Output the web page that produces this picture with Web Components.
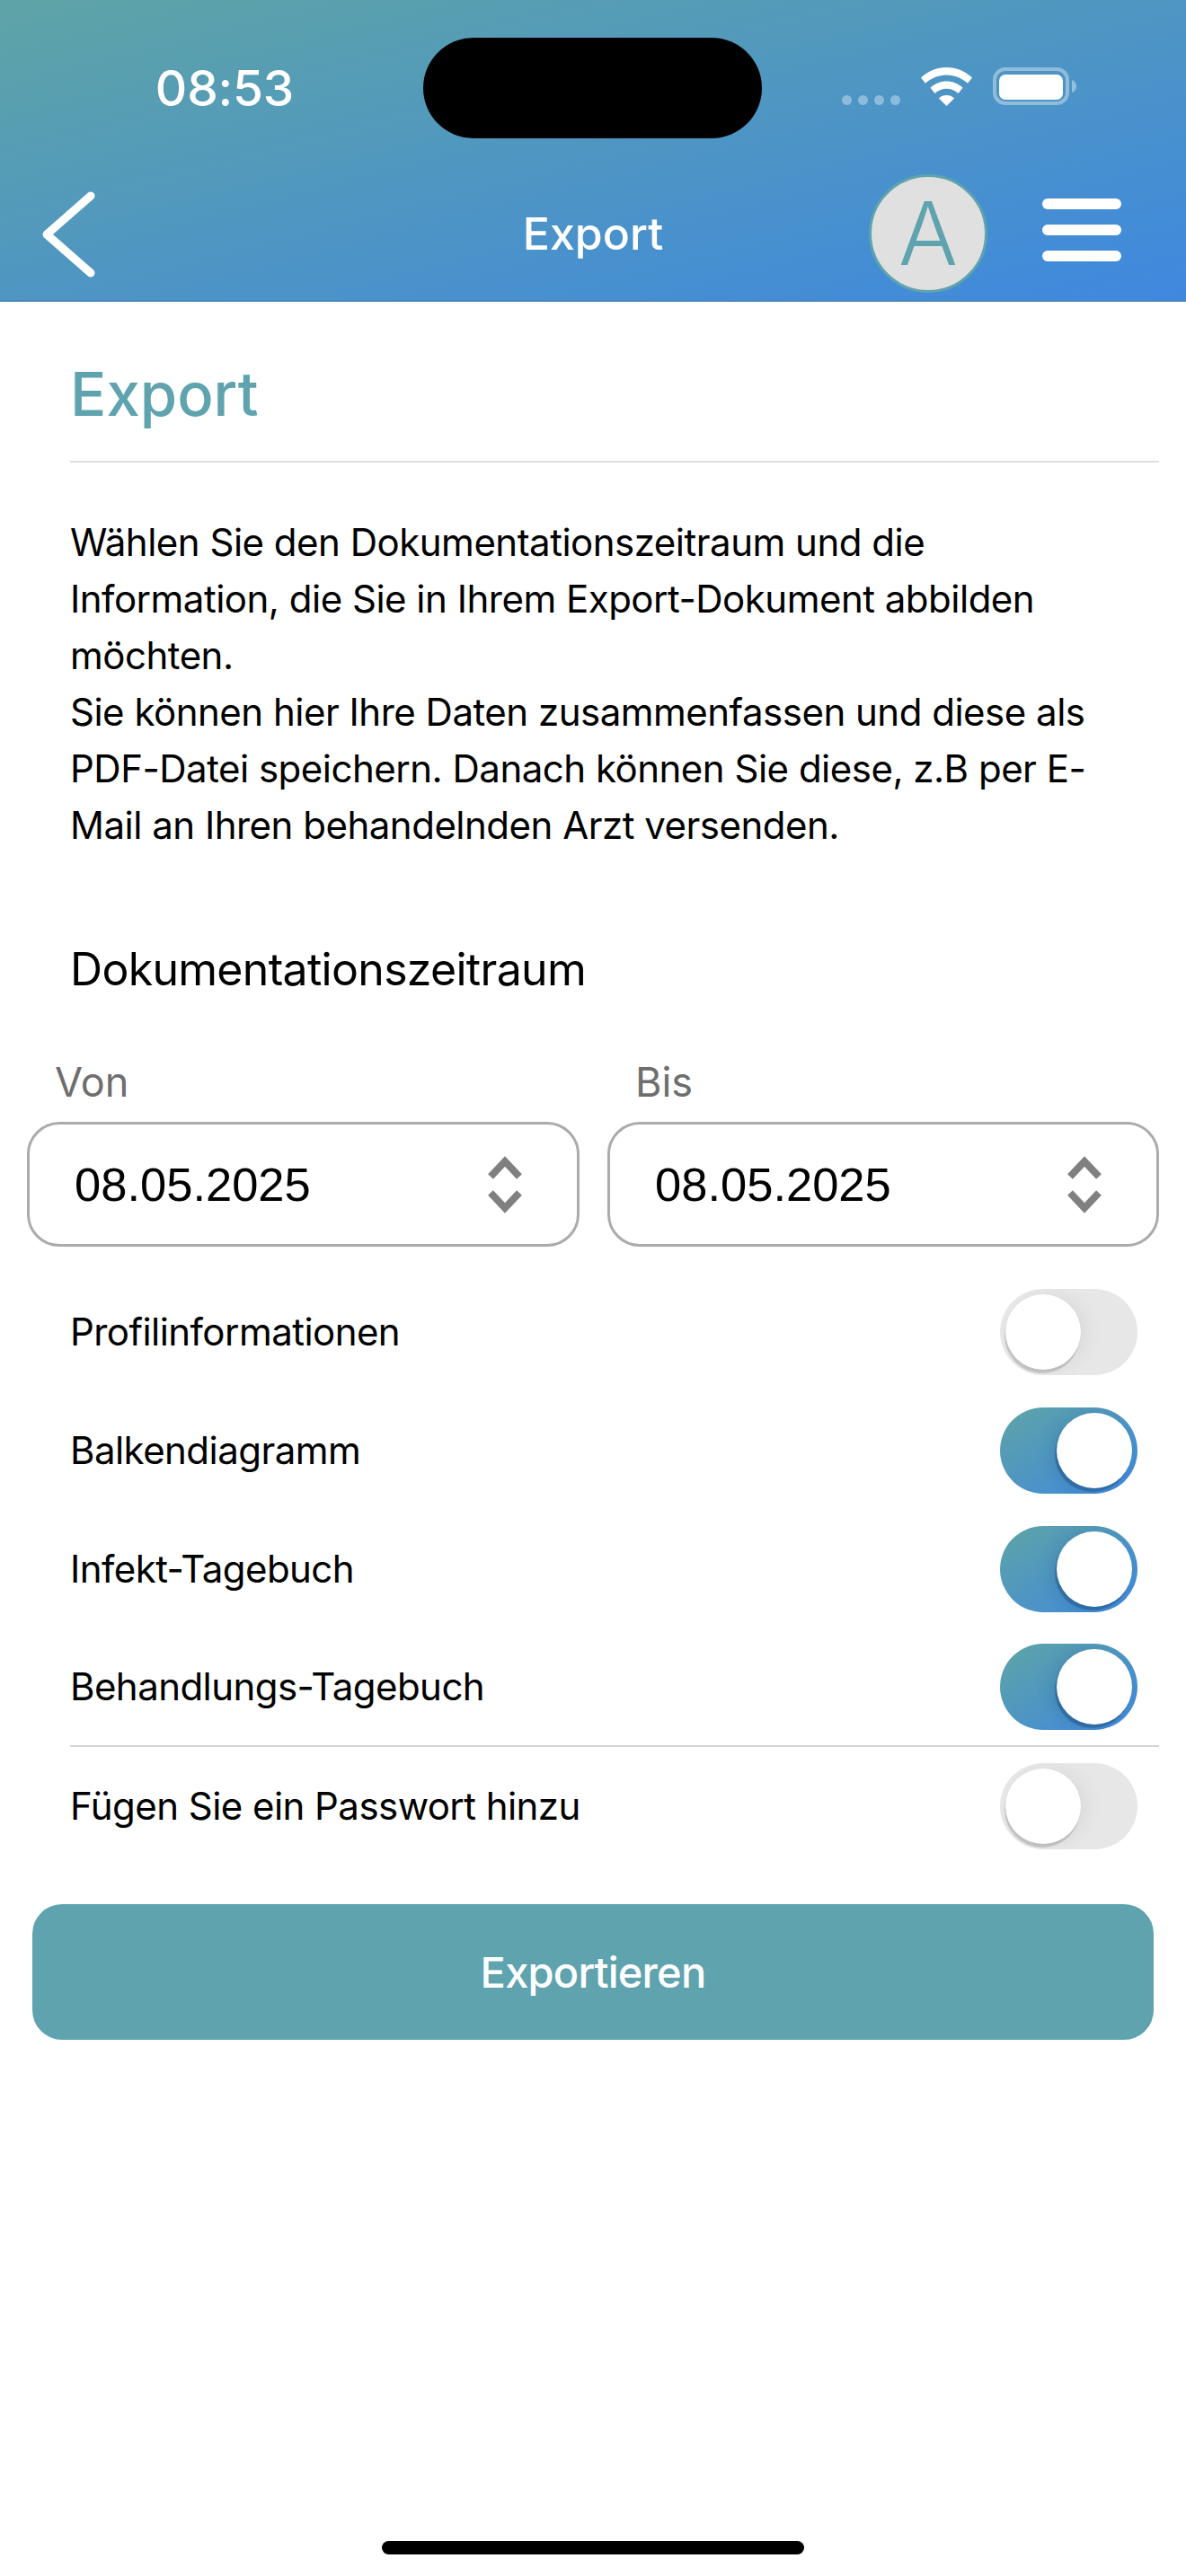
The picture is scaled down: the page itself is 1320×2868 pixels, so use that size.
<!DOCTYPE html>
<html lang="de">
<head>
<meta charset="utf-8">
<title>Export</title>
<style>
  html, body { margin: 0; padding: 0; background: #fff; }
  body { font-family: Inter, "Liberation Sans", sans-serif; color: #000; }
</style>
</head>
<body>
<export-page>
  <app-header title="Export" time="08:53" initial="A"></app-header>
  <page-title>Export</page-title>
  <intro-text>Wählen Sie den Dokumentationszeitraum und die<br>Information, die Sie in Ihrem Export-Dokument abbilden<br>möchten.<br>Sie können hier Ihre Daten zusammenfassen und diese als<br>PDF-Datei speichern. Danach können Sie diese, z.B per E-<br>Mail an Ihren behandelnden Arzt versenden.</intro-text>
  <section-title>Dokumentationszeitraum</section-title>
  <date-range>
    <date-field label="Von" value="08.05.2025"></date-field>
    <date-field label="Bis" value="08.05.2025"></date-field>
  </date-range>
  <toggle-row>Profilinformationen</toggle-row>
  <toggle-row checked>Balkendiagramm</toggle-row>
  <toggle-row checked>Infekt-Tagebuch</toggle-row>
  <toggle-row checked divider>Behandlungs-Tagebuch</toggle-row>
  <toggle-row>Fügen Sie ein Passwort hinzu</toggle-row>
  <export-button>Exportieren</export-button>
  <home-indicator></home-indicator>
</export-page>

<script>
class ExportPage extends HTMLElement {
    connectedCallback() {
        this.attachShadow({ mode: 'open' });
        this.shadowRoot.innerHTML = `
            <style>
                :host { display: flex; flex-direction: column; width: 1320px; height: 2868px; overflow: hidden; background: #fff; }
            </style>
            <slot></slot>
        `;
    }
}

class AppHeader extends HTMLElement {
    connectedCallback() {
        this.attachShadow({ mode: 'open' });
        this.shadowRoot.innerHTML = `
            <style>
                :host { display: block; height: 336px; box-sizing: border-box; color: #fff;
                    background: linear-gradient(to bottom right, #5ea4a6, #3f88df);
                    border-bottom: 2px solid #4a86bd; font-family: Inter, sans-serif; }
                .status { display: grid; grid-template-columns: 471px 377px 1fr; height: 154px; padding-top: 42px; box-sizing: border-box; }
                .time { font-size: 55px; font-weight: 500; line-height: 112px; text-align: center; padding-left: 29px; height: 112px; letter-spacing: -0.2px; }
                .island { background: #000; border-radius: 56px; height: 112px; }
                .icons { display: flex; align-items: flex-start; padding: 33px 0 0 89px; }
                .dots { display: flex; gap: 7px; margin: 31px 23px 0 0; }
                .dots i { width: 11px; height: 11px; border-radius: 50%; background: rgba(255,255,255,.36); }
                .wifi { width: 57px; height: 43px; margin-right: 23px; }
                .battery { width: 94px; height: 43px; }
                .nav { display: grid; grid-template-columns: 1fr auto 1fr; align-items: center; height: 182px; }
                .back { width: 64px; height: 96px; margin: 32px 0 0 45px; display: block; }
                .title { font-size: 50px; font-weight: 500; margin-top: 30px; }
                .right { display: flex; justify-content: flex-end; align-items: center; margin-top: 29px; padding-right: 72px; gap: 61px; }
                .avatar { width: 132px; height: 132px; box-sizing: border-box; border: 3px solid #5fa3ae; border-radius: 50%; background: #e0e0e0;
                    color: #5fa3ae; font: 300 98px/126px Inter, sans-serif; text-align: center; }
                .menu { display: flex; flex-direction: column; gap: 17px; width: 88px; margin-top: -7px; }
                .menu i { height: 12px; border-radius: 6px; background: #fff; }
            </style>
            <div class="status">
                <div class="time">${this.getAttribute('time')}</div>
                <div class="island"></div>
                <div class="icons">
                    <div class="dots"><i></i><i></i><i></i><i></i></div>
                    <svg class="wifi" viewBox="0 0 57 43" fill="#fff">
                        <path d="M28.5 0C17.5 0 7.600 4.400 0 11.600l5 6.200C11 12 19.400 8.400 28.500 8.400S46 12 52 17.800l5-6.200C49.400 4.400 39.500 0 28.500 0z"/>
                        <path d="M28.500 15.500c-7 0-13.300 2.700-18 7.200l5 6.200c3.400-3.200 8-5.200 13-5.200s9.600 2 13 5.200l5-6.200c-4.700-4.500-11-7.200-18-7.200z"/>
                        <path d="M28.500 31c-3.300 0-6.400 1.200-8.600 3.400L28.500 43l8.600-8.600c-2.200-2.200-5.300-3.400-8.600-3.400z"/>
                    </svg>
                    <svg class="battery" viewBox="0 0 94 43">
                        <rect x="2" y="2" width="81" height="38" rx="12" fill="none" stroke="#fff" stroke-opacity=".38" stroke-width="4"/>
                        <rect x="7" y="8" width="71" height="28" rx="7" fill="#fff"/>
                        <path d="M88 14c3 1 5 3.500 5 7s-2 6-5 7z" fill="#fff" fill-opacity=".4"/>
                    </svg>
                </div>
            </div>
            <div class="nav">
                <svg class="back" viewBox="0 0 64 96" fill="none" stroke="#fff" stroke-width="9" stroke-linecap="round" stroke-linejoin="round">
                    <path d="M56 5 7 48l49 43"/>
                </svg>
                <div class="title">${this.getAttribute('title')}</div>
                <div class="right">
                    <div class="avatar">${this.getAttribute('initial')}</div>
                    <div class="menu"><i></i><i></i><i></i></div>
                </div>
            </div>
        `;
    }
}

class PageTitle extends HTMLElement {
    connectedCallback() {
        this.attachShadow({ mode: 'open' });
        this.shadowRoot.innerHTML = `
            <style>
                :host { display: block; margin: 0 30px 0 78px; height: 179px; box-sizing: border-box; border-bottom: 2px solid #dedede;
                    color: #5fa3ae; font: 500 67px/114px Inter, sans-serif; padding-top: 46px; }
            </style>
            <slot></slot>
        `;
    }
}

class IntroText extends HTMLElement {
    connectedCallback() {
        this.attachShadow({ mode: 'open' });
        this.shadowRoot.innerHTML = `
            <style>
                :host { display: block; margin: 57px 0 0 78px; font: 400 42px/63px Inter, sans-serif; letter-spacing: -0.5px; white-space: nowrap; }
            </style>
            <slot></slot>
        `;
    }
}

class SectionTitle extends HTMLElement {
    connectedCallback() {
        this.attachShadow({ mode: 'open' });
        this.shadowRoot.innerHTML = `
            <style>
                :host { display: block; margin: 93px 0 0 78px; font: 400 50px/72px Inter, sans-serif; letter-spacing: -0.7px; }
            </style>
            <slot></slot>
        `;
    }
}

class DateRange extends HTMLElement {
    connectedCallback() {
        this.attachShadow({ mode: 'open' });
        this.shadowRoot.innerHTML = `
            <style>
                :host { display: grid; grid-template-columns: 615px 614px; gap: 31px; margin: 60px 0 29px 30px; }
            </style>
            <slot></slot>
        `;
    }
}

class DateField extends HTMLElement {
    connectedCallback() {
        this.attachShadow({ mode: 'open' });
        this.shadowRoot.innerHTML = `
            <style>
                :host { display: block; }
                label { display: block; height: 74px; padding-left: 31px; color: #6e6e6e; font: 400 45px/60px Inter, sans-serif; }
                .box { display: flex; align-items: center; justify-content: space-between; height: 139px; box-sizing: border-box;
                    border: 3px solid #ababab; border-radius: 36px; padding: 0 60px 0 50px; background: #fff; }
                .value { font: 400 52.500px/60px "Liberation Sans", sans-serif; color: #000; }
                svg { width: 40px; height: 64px; display: block; }
            </style>
            <label>${this.getAttribute('label')}</label>
            <div class="box">
                <span class="value">${this.getAttribute('value')}</span>
                <svg viewBox="0 0 40 64" fill="none" stroke="#808080" stroke-width="8">
                    <path d="M4 23 20 6l16 17M4 41l16 17 16-17"/>
                </svg>
            </div>
        `;
    }
}

class ToggleSwitch extends HTMLElement {
    connectedCallback() {
        this.attachShadow({ mode: 'open' });
        this.shadowRoot.innerHTML = `
            <style>
                :host { display: flex; flex: none; width: 153px; height: 96px; box-sizing: border-box; padding: 6px; border-radius: 48px;
                    background: #e7e7e7; justify-content: flex-start; overflow: hidden; }
                :host([checked]) { background: linear-gradient(to bottom right, #5ea4a6, #3f88df); justify-content: flex-end; }
                .thumb { width: 84px; height: 84px; border-radius: 50%; background: #fff;
                    box-shadow: -1px 4px 1px rgba(0,0,0,.15), 8px 0 20px rgba(0,0,0,.05), 0 0 2px rgba(0,0,0,.06); }
                :host([checked]) .thumb { box-shadow: -2px 4px 1px rgba(30,80,130,.5), -6px 2px 16px rgba(30,80,130,.22); }
            </style>
            <div class="thumb"></div>
        `;
    }
}

class ToggleRow extends HTMLElement {
    connectedCallback() {
        this.attachShadow({ mode: 'open' });
        const on = this.hasAttribute('checked') ? 'checked' : '';
        this.shadowRoot.innerHTML = `
            <style>
                :host { display: flex; align-items: center; justify-content: space-between; height: 132px; box-sizing: border-box;
                    margin: 0 30px 0 78px; padding-right: 24px; font: 400 42px/54px Inter, sans-serif; letter-spacing: -0.55px; }
                :host([divider]) { border-bottom: 2px solid #d4d4d4; }
            </style>
            <span><slot></slot></span>
            <toggle-switch ${on}></toggle-switch>
        `;
    }
}

class ExportButton extends HTMLElement {
    connectedCallback() {
        this.attachShadow({ mode: 'open' });
        this.shadowRoot.innerHTML = `
            <style>
                :host { display: flex; align-items: center; justify-content: center; height: 151px; margin: 43px 36px 0;
                    border-radius: 33px; background: #5ea3ae; color: #fff; font: 500 47px/60px Inter, sans-serif; letter-spacing: -0.8px; }
            </style>
            <slot></slot>
        `;
    }
}

class HomeIndicator extends HTMLElement {
    connectedCallback() {
        this.attachShadow({ mode: 'open' });
        this.shadowRoot.innerHTML = `
            <style>
                :host { display: block; width: 470px; height: 15px; margin: auto auto 24px; border-radius: 8px; background: #000; }
            </style>
        `;
    }
}

customElements.define('export-page', ExportPage);
customElements.define('app-header', AppHeader);
customElements.define('page-title', PageTitle);
customElements.define('intro-text', IntroText);
customElements.define('section-title', SectionTitle);
customElements.define('date-range', DateRange);
customElements.define('date-field', DateField);
customElements.define('toggle-switch', ToggleSwitch);
customElements.define('toggle-row', ToggleRow);
customElements.define('export-button', ExportButton);
customElements.define('home-indicator', HomeIndicator);
</script>
</body>
</html>
